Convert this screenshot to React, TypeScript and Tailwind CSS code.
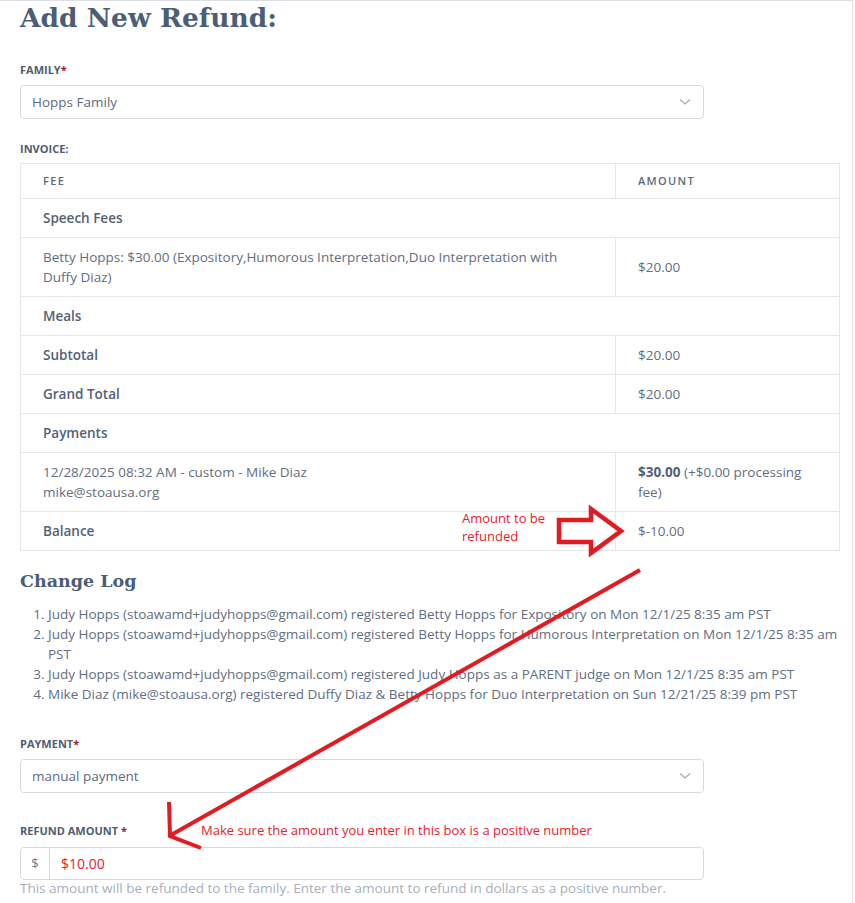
import React from 'react';

const body = { fontFamily: '"Open Sans", "Noto Sans", sans-serif' };
const slab = { fontFamily: '"DejaVu Serif", "Liberation Serif", serif' };

const Chevron: React.FC = () => (
  <svg width="12" height="8" viewBox="0 0 12 8" className="text-[#a3abb7]">
    <path d="M1 1.5 L6 6 L11 1.5" fill="none" stroke="currentColor" strokeWidth="1.3" />
  </svg>
);

const Label: React.FC<{ text: string; star: string; className?: string }> = ({ text, star, className }) => (
  <div className={`text-[11px] font-bold uppercase text-[#4f5d70] leading-[14px] ${className ?? ''}`}>
    {text}
    <span className="text-[#a01c24]">{star}</span>
  </div>
);

const Select: React.FC<{ value: string; className?: string }> = ({ value, className }) => (
  <div
    className={`w-[684px] h-[34px] border border-[#d6dae0] rounded-[4px] flex items-center justify-between pl-[11px] pr-[12px] text-[13.5px] text-[#5d6b7e] bg-white ${className ?? ''}`}
  >
    <span>{value}</span>
    <Chevron />
  </div>
);

const cell = 'border border-[#e4e7eb] px-[22px] py-[9px] align-middle';
const head = 'border border-[#e4e7eb] px-[22px] py-[7px] align-middle text-[11px] font-semibold tracking-[0.12em] text-[#5b6a7d]';
const strong = `${cell} font-semibold text-[#536176]`;

const changes = [
  'Judy Hopps (stoawamd+judyhopps@gmail.com) registered Betty Hopps for Expository on Mon 12/1/25 8:35 am PST',
  'Judy Hopps (stoawamd+judyhopps@gmail.com) registered Betty Hopps for Humorous Interpretation on Mon 12/1/25 8:35 am PST',
  'Judy Hopps (stoawamd+judyhopps@gmail.com) registered Judy Hopps as a PARENT judge on Mon 12/1/25 8:35 am PST',
  'Mike Diaz (mike@stoausa.org) registered Duffy Diaz & Betty Hopps for Duo Interpretation on Sun 12/21/25 8:39 pm PST',
];

export default function App() {
  return (
    <div className="bg-white min-h-[903px] w-[855px] overflow-hidden" style={body}>
      <div className="relative w-[853px] min-h-[903px] border-t border-r border-[#dcdfe3] pl-[20px] pr-[12px] text-[#5f6e81]">
        <h1 className="text-[26.5px] font-bold leading-[34px] text-[#4b5d77]" style={slab}>
          Add New Refund:
        </h1>

        <Label text="Family" star="*" className="mt-[28px]" />
        <Select value="Hopps Family" className="mt-[8px]" />

        <Label text="Invoice:" star="" className="mt-[23px]" />
        <table className="mt-[7px] w-[820px] border-collapse text-[13.5px] leading-[20px]">
          <tbody>
            <tr>
              <td className={`${head} w-[595px]`}>FEE</td>
              <td className={head}>AMOUNT</td>
            </tr>
            <tr>
              <td colSpan={2} className={strong}>Speech Fees</td>
            </tr>
            <tr>
              <td className={cell}>
                Betty Hopps: $30.00 (Expository,Humorous Interpretation,Duo Interpretation with
                <br />
                Duffy Diaz)
              </td>
              <td className={cell}>$20.00</td>
            </tr>
            <tr>
              <td colSpan={2} className={strong}>Meals</td>
            </tr>
            <tr>
              <td className={strong}>Subtotal</td>
              <td className={cell}>$20.00</td>
            </tr>
            <tr>
              <td className={strong}>Grand Total</td>
              <td className={cell}>$20.00</td>
            </tr>
            <tr>
              <td colSpan={2} className={strong}>Payments</td>
            </tr>
            <tr>
              <td className={cell}>
                12/28/2025 08:32 AM - custom - Mike Diaz
                <br />
                mike@stoausa.org
              </td>
              <td className={cell}>
                <span className="font-bold text-[#536176]">$30.00</span> (+$0.00 processing fee)
              </td>
            </tr>
            <tr>
              <td className={strong}>Balance</td>
              <td className={cell}>$-10.00</td>
            </tr>
          </tbody>
        </table>

        <h2 className="mt-[17px] text-[17.5px] font-bold leading-[26px] text-[#4b5d77]" style={slab}>
          Change Log
        </h2>
        <ol className="mt-[10px] list-decimal pl-[28px] text-[13.5px] leading-[20px]">
          {changes.map((c) => (
            <li key={c}>{c}</li>
          ))}
        </ol>

        <Label text="Payment" star="*" className="mt-[33px]" />
        <Select value="manual payment" className="mt-[8px]" />

        <Label text="Refund Amount " star="*" className="mt-[31px]" />
        <div className="mt-[9px] w-[684px] h-[33px] border border-[#d6dae0] rounded-[4px] flex text-[14px]">
          <div className="w-[29px] border-r border-[#d6dae0] flex items-center justify-center text-[#6b7789] text-[13px]">$</div>
          <div className="flex items-center pl-[11px] text-[#e3222b]">$10.00</div>
        </div>
        <p className="text-[13.5px] leading-[20px] text-[#a6afbc] -mt-[2px]">
          This amount will be refunded to the family. Enter the amount to refund in dollars as a positive number.
        </p>

        {/* annotations drawn over the screenshot */}
        <div className="absolute left-[462px] top-[508px] text-[13px] leading-[18px] text-[#e3222b]">
          Amount to be
          <br />
          refunded
        </div>
        <div className="absolute left-[201px] top-[820px] text-[13px] leading-[18px] text-[#e3222b]">
          Make sure the amount you enter in this box is a positive number
        </div>
        <svg className="absolute left-0 top-0 pointer-events-none" width="853" height="903" viewBox="0 0 853 903">
          <path
            d="M559 519 L591 519 L591 508 L621 530 L591 552 L591 541 L559 541 Z"
            fill="none"
            stroke="#e21b23"
            strokeWidth="4.5"
            strokeLinejoin="miter"
          />
          <path d="M640 569 L171 834" fill="none" stroke="#e21b23" strokeWidth="4" />
          <path d="M169 801 L170 835 L201 847" fill="none" stroke="#e21b23" strokeWidth="4" />
        </svg>
      </div>
    </div>
  );
}
